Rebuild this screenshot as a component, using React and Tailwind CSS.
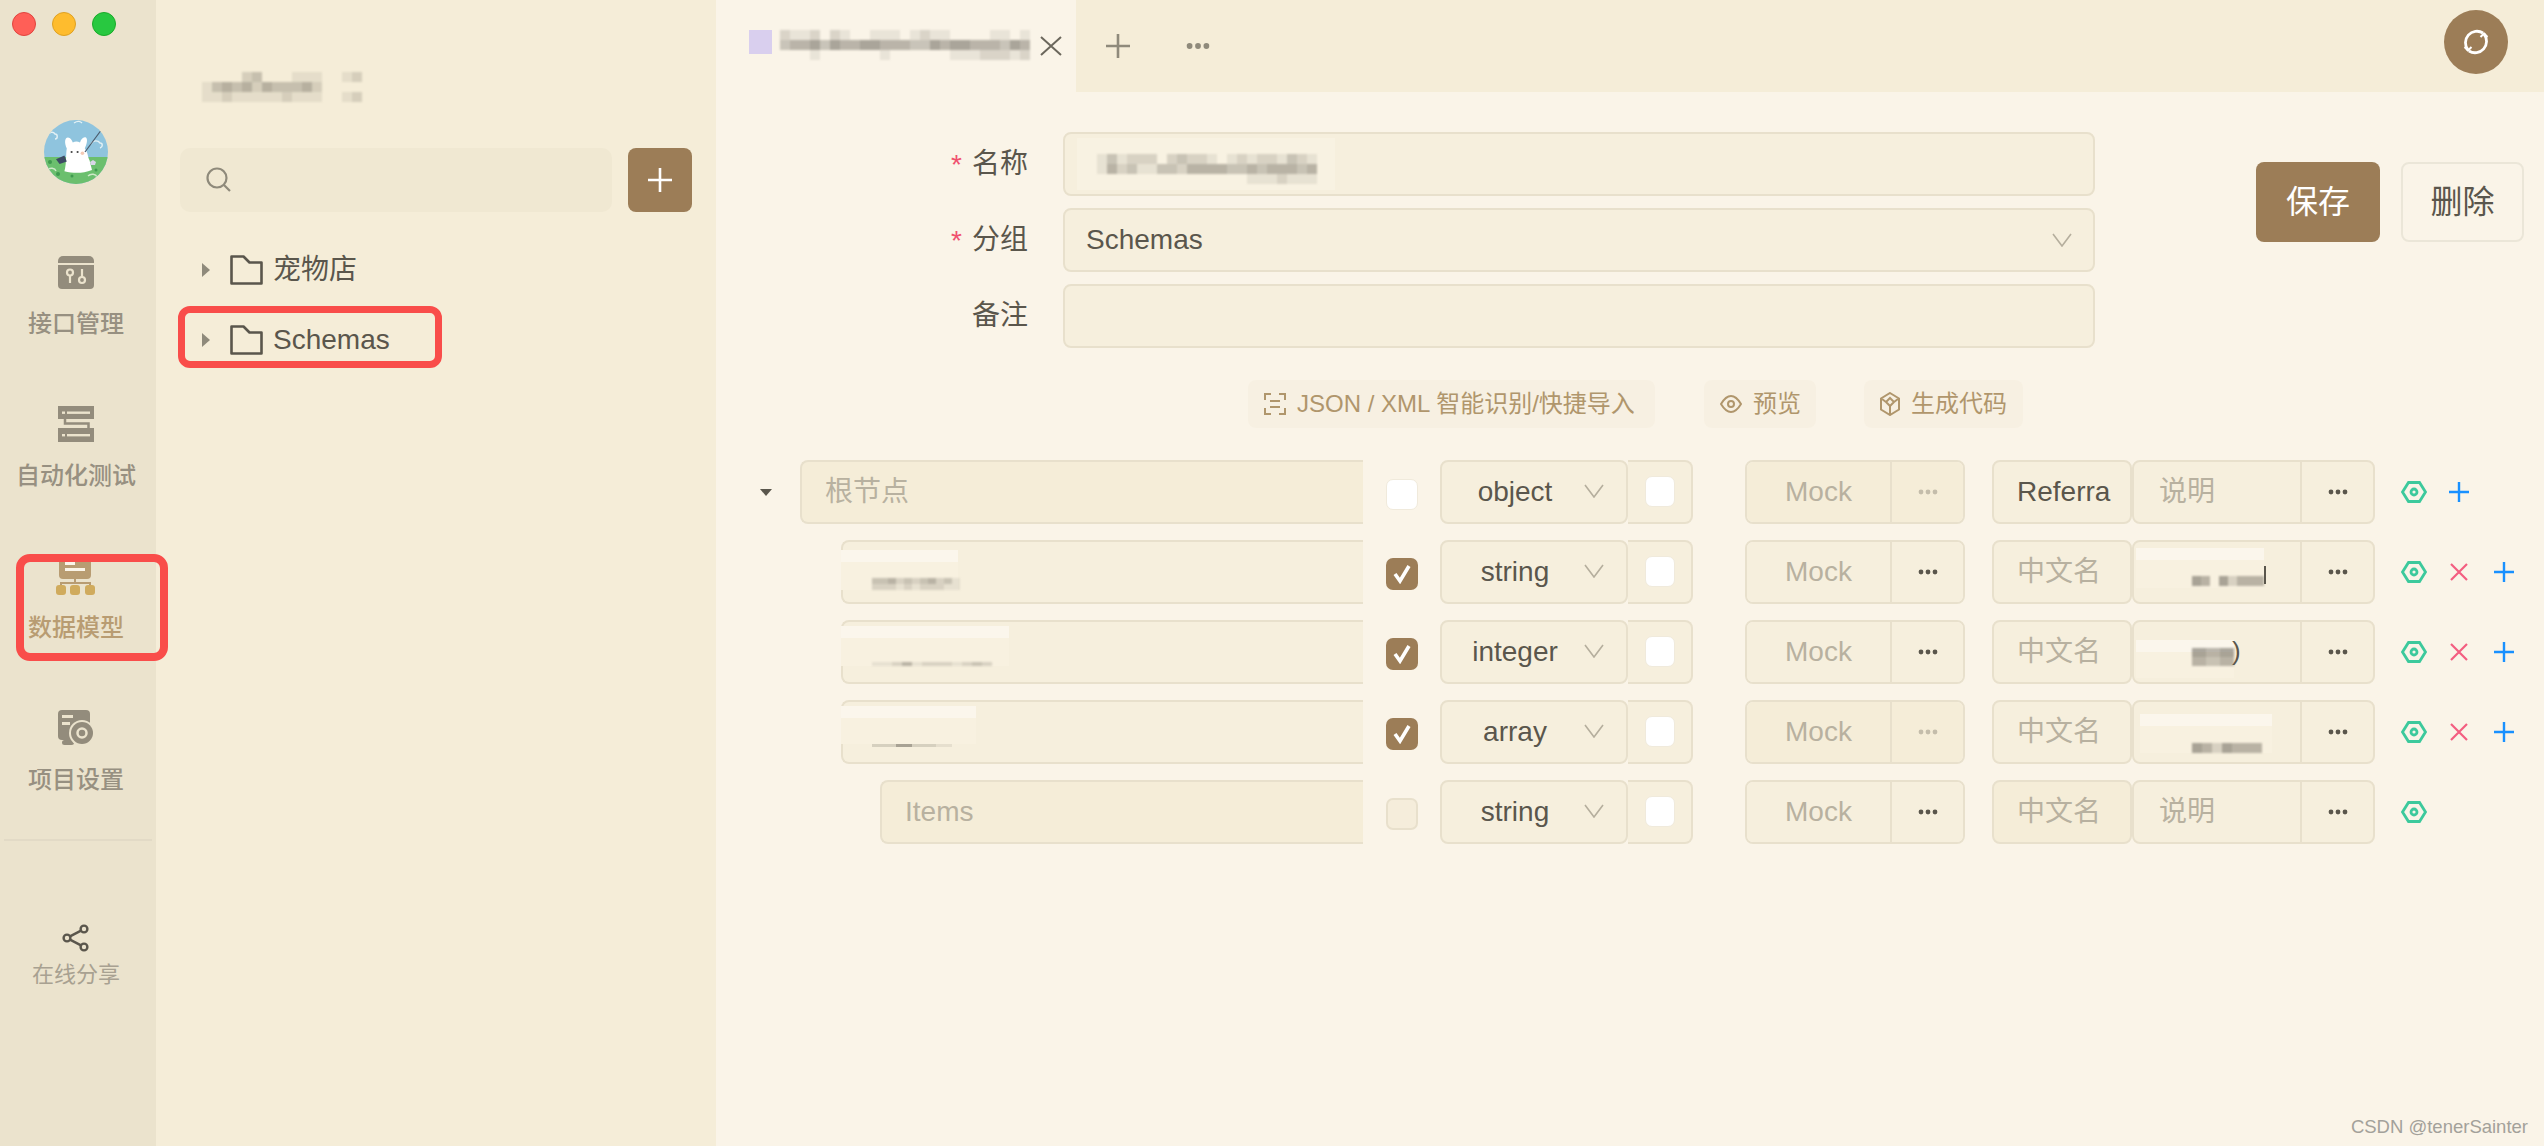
import React from "react";

const FONT = "font-['Liberation_Sans','Noto_Sans_CJK_SC',sans-serif]";

function Mosaic({ rows, cw = 10, ch = 10, color = "#5a564c", className = "" }) {
  const w = rows[0].length * cw;
  const h = rows.length * ch;
  return (
    <svg width={w} height={h} viewBox={`0 0 ${w} ${h}`} shapeRendering="crispEdges" className={className}>
      {rows.flatMap((r, y) =>
        [...r].map((c, x) =>
          c === "0" ? null : (
            <rect key={`${x}-${y}`} x={x * cw} y={y * ch} width={cw} height={ch} fill={color} opacity={Number(c) / 10} />
          )
        )
      )}
    </svg>
  );
}

const Dots = ({ color = "#5a564c", wide }) => (
  <svg width={wide ? 24 : 20} height={wide ? 8 : 6} viewBox="0 0 20 6" fill={color}>
    <circle cx="3" cy="3" r="2.4" />
    <circle cx="10" cy="3" r="2.4" />
    <circle cx="17" cy="3" r="2.4" />
  </svg>
);

const Chevron = ({ className = "" }) => (
  <svg width="20" height="14" viewBox="0 0 20 14" fill="none" stroke="#b5ae9d" strokeWidth="1.6" className={className}>
    <path d="M1 1l9 12 9-12" />
  </svg>
);

const Caret = ({ down }) => (
  <svg width="12" height="14" viewBox="0 0 12 14" fill={down ? "#5a564c" : "#8f8a7b"}>
    {down ? <path d="M0 4h12l-6 7z" /> : <path d="M2 0l8 7-8 7z" />}
  </svg>
);

const Folder = () => (
  <svg width="33" height="30" viewBox="0 0 33 30" fill="none" stroke="#5a564c" strokeWidth="2.6" strokeLinejoin="round">
    <path d="M1.5 1.5h12l6 6h12v21h-30z" />
  </svg>
);

const Avatar = () => (
  <svg width="64" height="64" viewBox="0 0 64 64" className="rounded-full">
    <rect width="64" height="64" fill="#8fc4de" />
    <path d="M0 37h64v27H0z" fill="#6bbf6e" />
    <g fill="none" stroke="#e4f1f5" strokeWidth="1.4">
      <path d="M3 16c2-4 6-5 8-2 3 0 3 5 0 5" />
      <path d="M47 24c2-4 7-4 9-1 3 0 3 4 0 5" />
      <path d="M30 3c3-2 6-2 8 0" />
      <path d="M3 50c3-3 8-2 9 1" stroke="#cfe9c9" />
      <path d="M44 56c3-3 8-2 9 1" stroke="#cfe9c9" />
    </g>
    <g transform="translate(-6 -4) scale(1.2)">
      <path d="M22 46c2-7 1-14 2-19-2-4-2-9 1-9 2 0 3 2 4 4 2-1 4-1 6 0 1-3 3-5 5-4 2 2 0 7-1 9 3 4 2 6 4 10l2 8c-8 3-15 3-23 1z" fill="#ffffff" />
      <circle cx="28" cy="30" r="0.9" fill="#444" />
      <circle cx="33" cy="30" r="0.9" fill="#444" />
      <circle cx="37" cy="31" r="1.5" fill="#f4c9b4" />
      <path d="M15 36l7-3 2 5-6 2z" fill="#3c4a63" />
    </g>
    <path d="M41 32L58 9" stroke="#4a5a6a" strokeWidth="1.2" />
    <path d="M46 42l3-2 3 2-1 3h-4z" fill="#d9d6e8" />
    <g fill="#3f9a4f">
      <circle cx="6" cy="42" r="2" />
      <circle cx="14" cy="54" r="2" />
      <circle cx="28" cy="56" r="1.5" />
      <circle cx="52" cy="50" r="1.5" />
    </g>
  </svg>
);

const IconApi = () => (
  <svg width="36" height="36" viewBox="0 0 36 36">
    <path d="M0 7a5 5 0 015-5h26a5 5 0 015 5v2H0z" fill="#938c7c" />
    <path d="M0 11h36v20a4 4 0 01-4 4H4a4 4 0 01-4-4z" fill="#938c7c" />
    <g fill="none" stroke="#ebe3cd" strokeWidth="2.2">
      <circle cx="12" cy="18.5" r="3" />
      <path d="M12 21.5V29" />
      <circle cx="24" cy="26" r="3" />
      <path d="M24 23v-8" />
    </g>
  </svg>
);

const IconTest = () => (
  <svg width="36" height="36" viewBox="0 0 36 36">
    <path d="M0 0h36v13H0zM0 22h36v14H0z" fill="#938c7c" />
    <path d="M7 13v4.5h23.5V22" fill="none" stroke="#938c7c" strokeWidth="2.5" />
    <g fill="#ebe3cd">
      <rect x="4" y="5.5" width="3" height="2.4" />
      <rect x="9" y="5.5" width="23" height="2.4" />
      <rect x="4" y="28" width="3" height="2.4" />
      <rect x="9" y="28" width="23" height="2.4" />
    </g>
  </svg>
);

const IconModel = () => (
  <svg width="40" height="37" viewBox="0 0 40 37">
    <path d="M3 0h32v17a4 4 0 01-4 4H7a4 4 0 01-4-4z" fill="#b89c72" />
    <rect x="9" y="4" width="10" height="3" fill="#faf4e8" />
    <rect x="9" y="10" width="20" height="3" fill="#faf4e8" />
    <path d="M19 21v5M5 27v-2h29v2" fill="none" stroke="#b89c72" strokeWidth="2" />
    <g fill="#d0ab5d">
      <rect x="0" y="27" width="10" height="10" rx="3" />
      <rect x="14" y="27" width="10" height="10" rx="3" />
      <rect x="29" y="27" width="10" height="10" rx="3" />
    </g>
  </svg>
);

const IconSetting = () => (
  <svg width="36" height="36" viewBox="0 0 36 36">
    <path d="M4 0h24a4 4 0 014 4v22a4 4 0 01-4 4H4a4 4 0 01-4-4V4a4 4 0 014-4z" fill="#938c7c" />
    <rect x="4" y="5" width="11" height="3" fill="#ebe3cd" />
    <rect x="4" y="12" width="8" height="3" fill="#ebe3cd" />
    <rect x="4" y="30" width="12" height="5" rx="2.5" fill="#938c7c" />
    <circle cx="24" cy="23" r="13" fill="#ebe3cd" />
    <circle cx="24" cy="23" r="11" fill="#938c7c" />
    <circle cx="24" cy="23" r="4.5" fill="none" stroke="#ebe3cd" strokeWidth="2.5" />
  </svg>
);

const IconShare = () => (
  <svg width="28" height="28" viewBox="0 0 28 28" fill="none" stroke="#5a564c" strokeWidth="2.4">
    <circle cx="5" cy="14" r="3.4" />
    <circle cx="22" cy="5" r="3.4" />
    <circle cx="22" cy="23" r="3.4" />
    <path d="M8 12.4L19 6.6M8 15.6L19 21.4" />
  </svg>
);

const Hex = () => (
  <svg width="26" height="22" viewBox="0 0 26 22" fill="none" stroke="#3cc99c" strokeWidth="2.8">
    <path d="M1.5 11l6-9.5h11l6 9.5-6 9.5h-11z" />
    <circle cx="13" cy="11" r="3" />
  </svg>
);

const Plus = () => (
  <svg width="20" height="20" viewBox="0 0 20 20" stroke="#1890ff" strokeWidth="2.4">
    <path d="M10 0v20M0 10h20" />
  </svg>
);

const Cross = () => (
  <svg width="18" height="18" viewBox="0 0 18 18" stroke="#f35e80" strokeWidth="2.2">
    <path d="M1 1l16 16M17 1L1 17" />
  </svg>
);

const Check = () => (
  <svg width="22" height="20" viewBox="0 0 22 20" fill="none" stroke="#ffffff" strokeWidth="3.6">
    <path d="M4 10l5 7L18 2" />
  </svg>
);

const NavItem = ({ icon, label, active }) => (
  <div className="flex flex-col items-center h-[86px]">
    <div className="h-[36px] flex items-center justify-center">{icon}</div>
    <div className={`mt-[18px] text-[24px] leading-[32px] font-medium ${active ? "text-[#b89c72]" : "text-[#979081]"}`}>{label}</div>
  </div>
);

const Patch = ({ className, children }) => (
  <div className={`absolute bg-[#f8f1e0] ${className}`}>
    <div className="h-[12px] bg-[#fbf6ec]" />
    {children}
  </div>
);

const rows = [
  {
    indent: "ml-0",
    caret: true,
    name: <span className="text-[#b8b1a0]">根节点</span>,
    checkbox: "plain",
    type: "object",
    mockOff: true,
    title: <span className="text-[#5a564c]">Referra</span>,
    desc: <span className="text-[#b8b1a0] ml-[25px]">说明</span>,
    actions: "add",
    nameBg: "bg-[#f5edd8]",
  },
  {
    indent: "ml-[41px]",
    name: (
      <Patch className="-left-[2px] top-[8px] w-[117px] h-[40px]">
        <Mosaic className="absolute left-[31px] top-[28px] blur-[1px]" cw={8} ch={6} rows={["33423234231", "22212122211"]} />
      </Patch>
    ),
    checkbox: "on",
    type: "string",
    title: <span className="text-[#b8b1a0]">中文名</span>,
    desc: (
      <>
        <Patch className="left-[2px] top-[6px] w-[128px] h-[40px]">
          <Mosaic className="absolute left-[56px] top-[28px] blur-[1px]" cw={9} ch={10} rows={["54052444"]} />
        </Patch>
        <span className="absolute left-[130px] top-[24px] w-[2px] h-[18px] bg-[#5a564c]" />
      </>
    ),
    actions: "full",
  },
  {
    indent: "ml-[41px]",
    name: (
      <Patch className="-left-[2px] top-[4px] w-[168px] h-[40px]">
        <Mosaic className="absolute left-[31px] top-[36px] blur-[1px]" cw={10} ch={4} rows={["112412221232"]} />
      </Patch>
    ),
    checkbox: "on",
    type: "integer",
    title: <span className="text-[#b8b1a0]">中文名</span>,
    desc: (
      <>
        <Patch className="left-[2px] top-[18px] w-[98px] h-[38px]">
          <Mosaic className="absolute left-[56px] top-[8px] blur-[1px]" cw={14} ch={9} rows={["545", "434"]} />
        </Patch>
        <span className="absolute left-[98px] top-[14px] text-[26px] leading-[30px] text-[#5a564c]">)</span>
      </>
    ),
    actions: "full",
  },
  {
    indent: "ml-[41px]",
    name: (
      <Patch className="-left-[2px] top-[4px] w-[135px] h-[38px]">
        <Mosaic className="absolute left-[31px] top-[38px] blur-[0.5px]" cw={8} ch={3} rows={["2225522211"]} />
      </Patch>
    ),
    checkbox: "on",
    type: "array",
    mockOff: true,
    title: <span className="text-[#b8b1a0]">中文名</span>,
    desc: (
      <Patch className="left-[6px] top-[12px] w-[132px] h-[39px]">
        <Mosaic className="absolute left-[52px] top-[29px] blur-[1px]" cw={10} ch={10} rows={["5425444"]} />
      </Patch>
    ),
    actions: "full",
  },
  {
    indent: "ml-[80px]",
    name: <span className="text-[#b8b1a0]">Items</span>,
    checkbox: "off",
    type: "string",
    title: <span className="text-[#b8b1a0]">中文名</span>,
    titleOff: true,
    desc: <span className="text-[#b8b1a0] ml-[25px]">说明</span>,
    actions: "hex",
    nameBg: "bg-[#f5edd8]",
  },
];

const Row = ({ r }) => (
  <div className="flex items-center h-[64px]">
    <div className="w-[603px] h-full flex items-center shrink-0">
      <div className="w-[40px] shrink-0">{r.caret && <Caret down />}</div>
      <div
        className={`relative flex-1 h-full flex items-center pl-[23px] rounded-l-[8px] border-y-2 border-l-2 border-[#e8e0cc] ${r.indent} ${r.nameBg || "bg-[#f6efdd]"}`}
      >
        {r.name}
      </div>
    </div>
    <div className="w-[77px] shrink-0 flex justify-center">
      {r.checkbox === "plain" && <div className="w-[32px] h-[31px] mt-[4px] rounded-[7px] bg-white border border-[#f0eadc]" />}
      {r.checkbox === "on" && (
        <div className="w-[32px] h-[32px] mt-[4px] rounded-[7px] bg-[#9c7d57] flex items-center justify-center">
          <Check />
        </div>
      )}
      {r.checkbox === "off" && <div className="w-[32px] h-[32px] mt-[4px] rounded-[7px] bg-[#f5eddb] border-2 border-[#e8e0cc]" />}
    </div>
    <div className="w-[188px] h-full shrink-0 flex items-center bg-[#f6efdd] border-2 border-[#e8e0cc] rounded-[8px] pl-[4px]">
      <span className="flex-1 text-center text-[#5a564c]">{r.type}</span>
      <Chevron className="mr-[22px] -mt-[2px]" />
    </div>
    <div className="w-[65px] h-full shrink-0 flex items-center justify-center bg-[#f6efdd] border-y-2 border-r-2 border-[#e8e0cc] rounded-r-[8px]">
      <div className="w-[30px] h-[31px] -mt-[2px] rounded-[7px] bg-white border border-[#f0eadc]" />
    </div>
    <div className="w-[220px] h-full ml-[52px] shrink-0 flex items-stretch border-2 border-[#e8e0cc] rounded-[8px] overflow-hidden">
      <div className={`w-[145px] flex items-center justify-center text-[#b8b1a0] border-r-2 border-[#e8e0cc] ${r.mockOff ? "bg-[#f5edd8]" : "bg-[#f6efdd]"}`}>Mock</div>
      <div className={`flex-1 flex items-center justify-center ${r.mockOff ? "bg-[#f5edd8]" : "bg-[#f6efdd]"}`}>
        <Dots color={r.mockOff ? "#c4bdab" : "#5a564c"} />
      </div>
    </div>
    <div className={`w-[140px] h-full ml-[27px] shrink-0 flex items-center pl-[23px] border-2 border-[#e8e0cc] rounded-[8px] overflow-hidden whitespace-nowrap ${r.titleOff ? "bg-[#f5edd8]" : "bg-[#f6efdd]"}`}>
      {r.title}
    </div>
    <div className="w-[243px] h-full shrink-0 flex items-stretch border-2 border-[#e8e0cc] rounded-[8px] bg-[#f6efdd]">
      <div className="relative w-[168px] flex items-center border-r-2 border-[#e8e0cc]">{r.desc}</div>
      <div className="flex-1 flex items-center justify-center">
        <Dots />
      </div>
    </div>
    <div className="ml-[26px] flex items-center">
      <Hex />
      {r.actions === "add" && (
        <div className="ml-[22px]">
          <Plus />
        </div>
      )}
      {r.actions === "full" && (
        <>
          <div className="ml-[23px]">
            <Cross />
          </div>
          <div className="ml-[26px]">
            <Plus />
          </div>
        </>
      )}
    </div>
  </div>
);

const FormRow = ({ label, required, children }) => (
  <div className="flex items-center h-[64px]">
    <div className="w-[312px] flex justify-end items-center shrink-0 text-[#5a564c]">
      {required && <span className="text-[#f0506e] mr-[10px] mt-[2px]">*</span>}
      {label}
    </div>
    <div className="ml-[35px] w-[1032px] h-full relative flex items-center bg-[#f6efdd] border-2 border-[#e8e0cc] rounded-[8px] px-[21px]">{children}</div>
  </div>
);

const ToolBtn = ({ icon, label, className = "" }) => (
  <div className={`h-[48px] flex items-center pl-[16px] rounded-[8px] bg-[#f7f0e2] text-[24px] text-[#b0966c] ${className}`}>
    {icon}
    <span className="ml-[11px] whitespace-nowrap">{label}</span>
  </div>
);

export default function App() {
  return (
    <div className={`relative flex w-[2544px] h-[1146px] overflow-hidden text-[28px] ${FONT}`}>
      <aside className="w-[156px] shrink-0 bg-[#ebe3cd] flex flex-col">
        <div className="flex gap-[16px] pl-[12px] pt-[12px]">
          <span className="w-[24px] h-[24px] rounded-full bg-[#ff5f57] border border-[#e0443e]" />
          <span className="w-[24px] h-[24px] rounded-full bg-[#febc2e] border border-[#dea123]" />
          <span className="w-[24px] h-[24px] rounded-full bg-[#28c840] border border-[#1aab29]" />
        </div>
        <div className="mt-[84px] flex justify-center pr-[4px]">
          <Avatar />
        </div>
        <div className="mt-[70px] flex flex-col gap-[66px] pr-[4px]">
          <NavItem icon={<IconApi />} label="接口管理" />
          <NavItem icon={<IconTest />} label="自动化测试" />
          <NavItem icon={<IconModel />} label="数据模型" active />
          <NavItem icon={<IconSetting />} label="项目设置" />
        </div>
        <div className="mt-[43px] mx-[4px] h-[2px] bg-[#e2dac6]" />
        <div className="mt-[83px] flex flex-col items-center pr-[4px]">
          <IconShare />
          <div className="mt-[8px] text-[22px] leading-[30px] text-[#a8a191]">在线分享</div>
        </div>
      </aside>

      <section className="w-[560px] shrink-0 bg-[#f5edd8] flex flex-col pl-[24px]">
        <div className="pt-[72px] pl-[22px] h-[148px]">
          <Mosaic className="blur-[1px]" rows={["0000230001110012", "1343424333420000", "1121111121110012"]} />
        </div>
        <div className="flex gap-[16px]">
          <div className="w-[432px] h-[64px] rounded-[10px] bg-[#f0e8d2] flex items-center pl-[26px]">
            <svg width="26" height="26" viewBox="0 0 26 26" fill="none" stroke="#8f8a7b" strokeWidth="2.2">
              <circle cx="11" cy="11" r="9.5" />
              <path d="M18 18l6 6" />
            </svg>
          </div>
          <div className="w-[64px] h-[64px] rounded-[8px] bg-[#9c7d57] flex items-center justify-center">
            <svg width="26" height="26" viewBox="0 0 26 26" stroke="#ffffff" strokeWidth="2.6">
              <path d="M13 1v24M1 13h24" />
            </svg>
          </div>
        </div>
        <div className="mt-[23px]">
          <div className="h-[70px] flex items-center pl-[20px]">
            <Caret />
            <div className="ml-[18px]">
              <Folder />
            </div>
            <span className="ml-[10px] text-[#5a564c]">宠物店</span>
          </div>
          <div className="h-[70px] flex items-center pl-[20px]">
            <Caret />
            <div className="ml-[18px]">
              <Folder />
            </div>
            <span className="ml-[10px] text-[#5a564c]">Schemas</span>
          </div>
        </div>
      </section>

      <main className="flex-1 bg-[#faf4e8] flex flex-col">
        <header className="h-[92px] flex">
          <div className="w-[360px] h-full flex items-start pt-[30px] pl-[33px]">
            <div className="w-[23px] h-[24px] bg-[#d9cfee]" />
            <Mosaic
              className="ml-[8px] blur-[1px]"
              rows={["2112021001110121100001101", "3445354455444335455444354", "0001000000100000011122212"]}
            />
            <svg width="22" height="20" viewBox="0 0 22 20" stroke="#6b675c" strokeWidth="2" className="ml-[10px] mt-[6px]">
              <path d="M1 1l20 18M21 1L1 19" />
            </svg>
          </div>
          <div className="flex-1 bg-[#f5edd8] flex items-center pl-[29px] pr-[36px]">
            <svg width="26" height="26" viewBox="0 0 26 26" stroke="#8f8a7b" strokeWidth="2.6">
              <path d="M13 1v24M1 13h24" />
            </svg>
            <div className="ml-[55px]">
              <Dots color="#8f8a7b" wide />
            </div>
            <div className="ml-auto w-[64px] h-[64px] rounded-full bg-[#9c7d57] flex items-center justify-center -mt-[8px]">
              <svg width="30" height="30" viewBox="0 0 30 30" fill="none" stroke="#ffffff" strokeWidth="2.8">
                <path d="M22 6a11.5 11.5 0 00-15 17" />
                <path d="M8 24a11.5 11.5 0 0015-17" />
                <path d="M3.5 20l3.5 3.5 3.5-3.5M26.5 10L23 6.5 19.5 10" strokeWidth="2" />
              </svg>
            </div>
          </div>
        </header>

        <div className="flex pt-[40px]">
          <div className="flex flex-col gap-[12px]">
            <FormRow label="名称" required>
              <div className="absolute left-[12px] top-[4px] w-[258px] h-[52px] bg-[#f8f2e2]">
                <Mosaic
                  className="absolute left-[20px] top-[16px] blur-[1px]"
                  rows={["1312220232210121221321", "1423113324444334344434", "0000000000000001112111"]}
                />
              </div>
            </FormRow>
            <FormRow label="分组" required>
              <span className="text-[#5a564c]">Schemas</span>
              <Chevron className="ml-auto" />
            </FormRow>
            <FormRow label="备注" />
          </div>
          <div className="flex gap-[21px] ml-[161px] mt-[30px]">
            <div className="w-[124px] h-[80px] rounded-[8px] bg-[#9c7d57] text-white flex items-center justify-center text-[32px]">保存</div>
            <div className="w-[123px] h-[80px] rounded-[8px] border-2 border-[#ebe6d8] text-[#5a564c] flex items-center justify-center text-[32px]">删除</div>
          </div>
        </div>

        <div className="flex pl-[532px] mt-[32px]">
          <ToolBtn
            className="w-[407px]"
            label="JSON / XML 智能识别/快捷导入"
            icon={
              <svg width="22" height="22" viewBox="0 0 22 22" fill="none" stroke="#b0966c" strokeWidth="2">
                <path d="M7 1H1v6M15 1h6v6M7 21H1v-6M15 21h6v-6M6 8h10M6 14h10" />
              </svg>
            }
          />
          <ToolBtn
            className="w-[112px] ml-[49px]"
            label="预览"
            icon={
              <svg width="22" height="20" viewBox="0 0 22 20" fill="none" stroke="#b0966c" strokeWidth="2">
                <path d="M1 10c3-5 6-8 10-8s7 3 10 8c-3 5-6 8-10 8s-7-3-10-8z" />
                <circle cx="11" cy="10" r="3" />
              </svg>
            }
          />
          <ToolBtn
            className="w-[159px] ml-[48px]"
            label="生成代码"
            icon={
              <svg width="20" height="24" viewBox="0 0 20 24" fill="none" stroke="#b0966c" strokeWidth="2">
                <path d="M10 1l9 5.5v11L10 23l-9-5.5v-11z" />
                <path d="M10 6l4 4-4 4-4-4zM10 14v9M2 7l4 3M18 7l-4 3" />
              </svg>
            }
          />
        </div>

        <div className="mt-[32px] pl-[44px] flex flex-col gap-[16px]">
          {rows.map((r, i) => (
            <Row key={i} r={r} />
          ))}
        </div>
      </main>

      <div className="absolute left-[16px] top-[554px] w-[152px] h-[107px] rounded-[14px] border-[8px] border-[#f94d4a]" />
      <div className="absolute left-[178px] top-[306px] w-[264px] h-[62px] rounded-[12px] border-[7px] border-[#f94d4a]" />
      <div className="absolute right-[16px] bottom-[8px] text-[18.5px] leading-[22px] text-[#a3a19a]">CSDN @tenerSainter</div>
    </div>
  );
}
